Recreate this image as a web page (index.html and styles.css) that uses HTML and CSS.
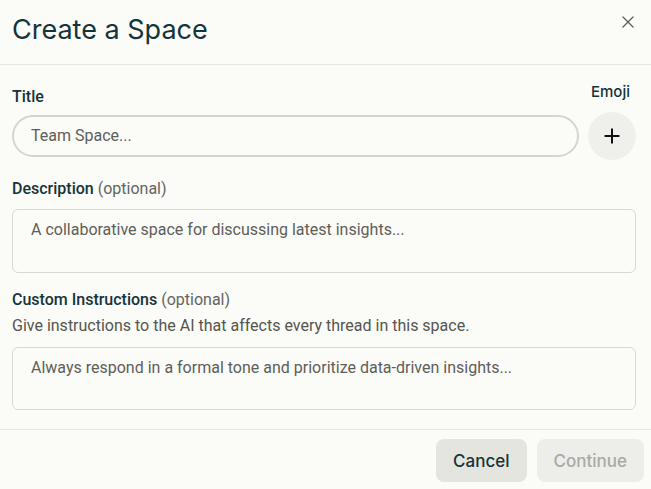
FILE: index.html
```html
<!DOCTYPE html>
<html>
<head>
<meta charset="utf-8">
<link rel="stylesheet" href="styles.css">
</head>
<body>
<div class="dialog">
  <header class="head">
    <h1 class="title">Create a Space</h1>
    <button class="close" aria-label="Close">
      <svg width="12" height="12" viewBox="0 0 12 12"><path d="M1 1L11 11M11 1L1 11" stroke="#5c5c58" stroke-width="1.3" stroke-linecap="round"/></svg>
    </button>
  </header>
  <main class="body">
    <div class="title-row">
      <div class="col-main">
        <label class="label">Title</label>
        <div class="input pill">Team Space...</div>
      </div>
      <div class="col-emoji">
        <span class="label emoji-label">Emoji</span>
        <button class="emoji-btn" aria-label="Add emoji">
          <svg width="18" height="18" viewBox="0 0 18 18"><path d="M9 1.5V16.5M1.5 9H16.5" stroke="#111" stroke-width="2"/></svg>
        </button>
      </div>
    </div>
    <div class="field">
      <div class="label">Description <span class="opt">(optional)</span></div>
      <div class="input area">A collaborative space for discussing latest insights...</div>
    </div>
    <div class="field">
      <div class="label">Custom Instructions <span class="opt">(optional)</span></div>
      <div class="help">Give instructions to the AI that affects every thread in this space.</div>
      <div class="input area">Always respond in a formal tone and prioritize data-driven insights...</div>
    </div>
  </main>
  <footer class="foot">
    <button class="btn cancel">Cancel</button>
    <button class="btn cont" disabled>Continue</button>
  </footer>
</div>
</body>
</html>
```
FILE: styles.css
```css
html, body {
  margin: 0;
  padding: 0;
  background: #fbfbf8;
}
.dialog {
  width: 651px;
  height: 489px;
  display: flex;
  flex-direction: column;
  font-family: Roboto, "Liberation Sans", sans-serif;
  color: #13343b;
}
.head {
  height: 65px;
  box-sizing: border-box;
  border-bottom: 1px solid #e6e6e1;
  display: flex;
  align-items: flex-start;
  justify-content: space-between;
  padding: 0 17px 0 12px;
}
.title {
  margin: 13px 0 0 0;
  font-family: Inter, "Liberation Sans", sans-serif;
  font-weight: 400;
  font-size: 27px;
  line-height: 34px;
  color: #13343b;
}
.close {
  margin-top: 16px;
  background: none;
  border: 0;
  padding: 0;
  width: 12px;
  height: 12px;
  display: flex;
}
.body {
  padding: 0 15px 0 12px;
  flex: 1;
}
.title-row {
  display: flex;
  align-items: flex-end;
  gap: 9px;
  margin-top: 17px;
}
.col-main {
  flex: 1;
  display: flex;
  flex-direction: column;
  gap: 8px;
  margin-bottom: 3px;
}
.col-emoji {
  display: flex;
  flex-direction: column;
  align-items: center;
  gap: 10px;
}
.label {
  font-size: 16px;
  font-weight: 500;
  line-height: 20px;
  color: #13343b;
}
.emoji-label {
  font-family: Inter, "Liberation Sans", sans-serif;
  font-size: 15px;
  margin-right: 6px;
  align-self: flex-end;
}
.opt {
  font-weight: 400;
  color: #64645f;
}
.input {
  box-sizing: border-box;
  font-size: 16px;
  color: #5e5e5a;
  line-height: 20px;
  background: #fbfbf8;
}
.pill {
  height: 42px;
  border: 2px solid #d6d5cd;
  border-radius: 21px;
  padding: 9px 17px;
}
.emoji-btn {
  width: 48px;
  height: 48px;
  border-radius: 50%;
  border: 0;
  background: #efefeb;
  display: flex;
  align-items: center;
  justify-content: center;
  padding: 0;
}
.field {
  margin-top: 19px;
  display: flex;
  flex-direction: column;
}
.field .label {
  margin-bottom: 10px;
}
.field + .field {
  margin-top: 17px;
}
.help {
  font-size: 16px;
  line-height: 20px;
  color: #55554f;
  margin-top: -4px;
  margin-bottom: 11px;
}
.area {
  height: 64px;
  border: 1px solid #d9d9d4;
  border-radius: 6px;
  padding: 10px 18px;
}
.field + .field .area {
  height: 63px;
}
.foot {
  height: 60px;
  box-sizing: border-box;
  border-top: 1px solid #e6e6e1;
  display: flex;
  justify-content: flex-end;
  align-items: flex-start;
  gap: 10px;
  padding: 9px 7px 0 0;
}
.btn {
  height: 43px;
  border: 0;
  border-radius: 8px;
  font-family: Inter, "Liberation Sans", sans-serif;
  font-size: 17px;
  font-weight: 500;
  padding: 0 17px;
}
.cancel {
  background: #e5e5e0;
  color: #13343b;
}
.cont {
  background: #ededea;
  color: #a9a9a5;
}
```
